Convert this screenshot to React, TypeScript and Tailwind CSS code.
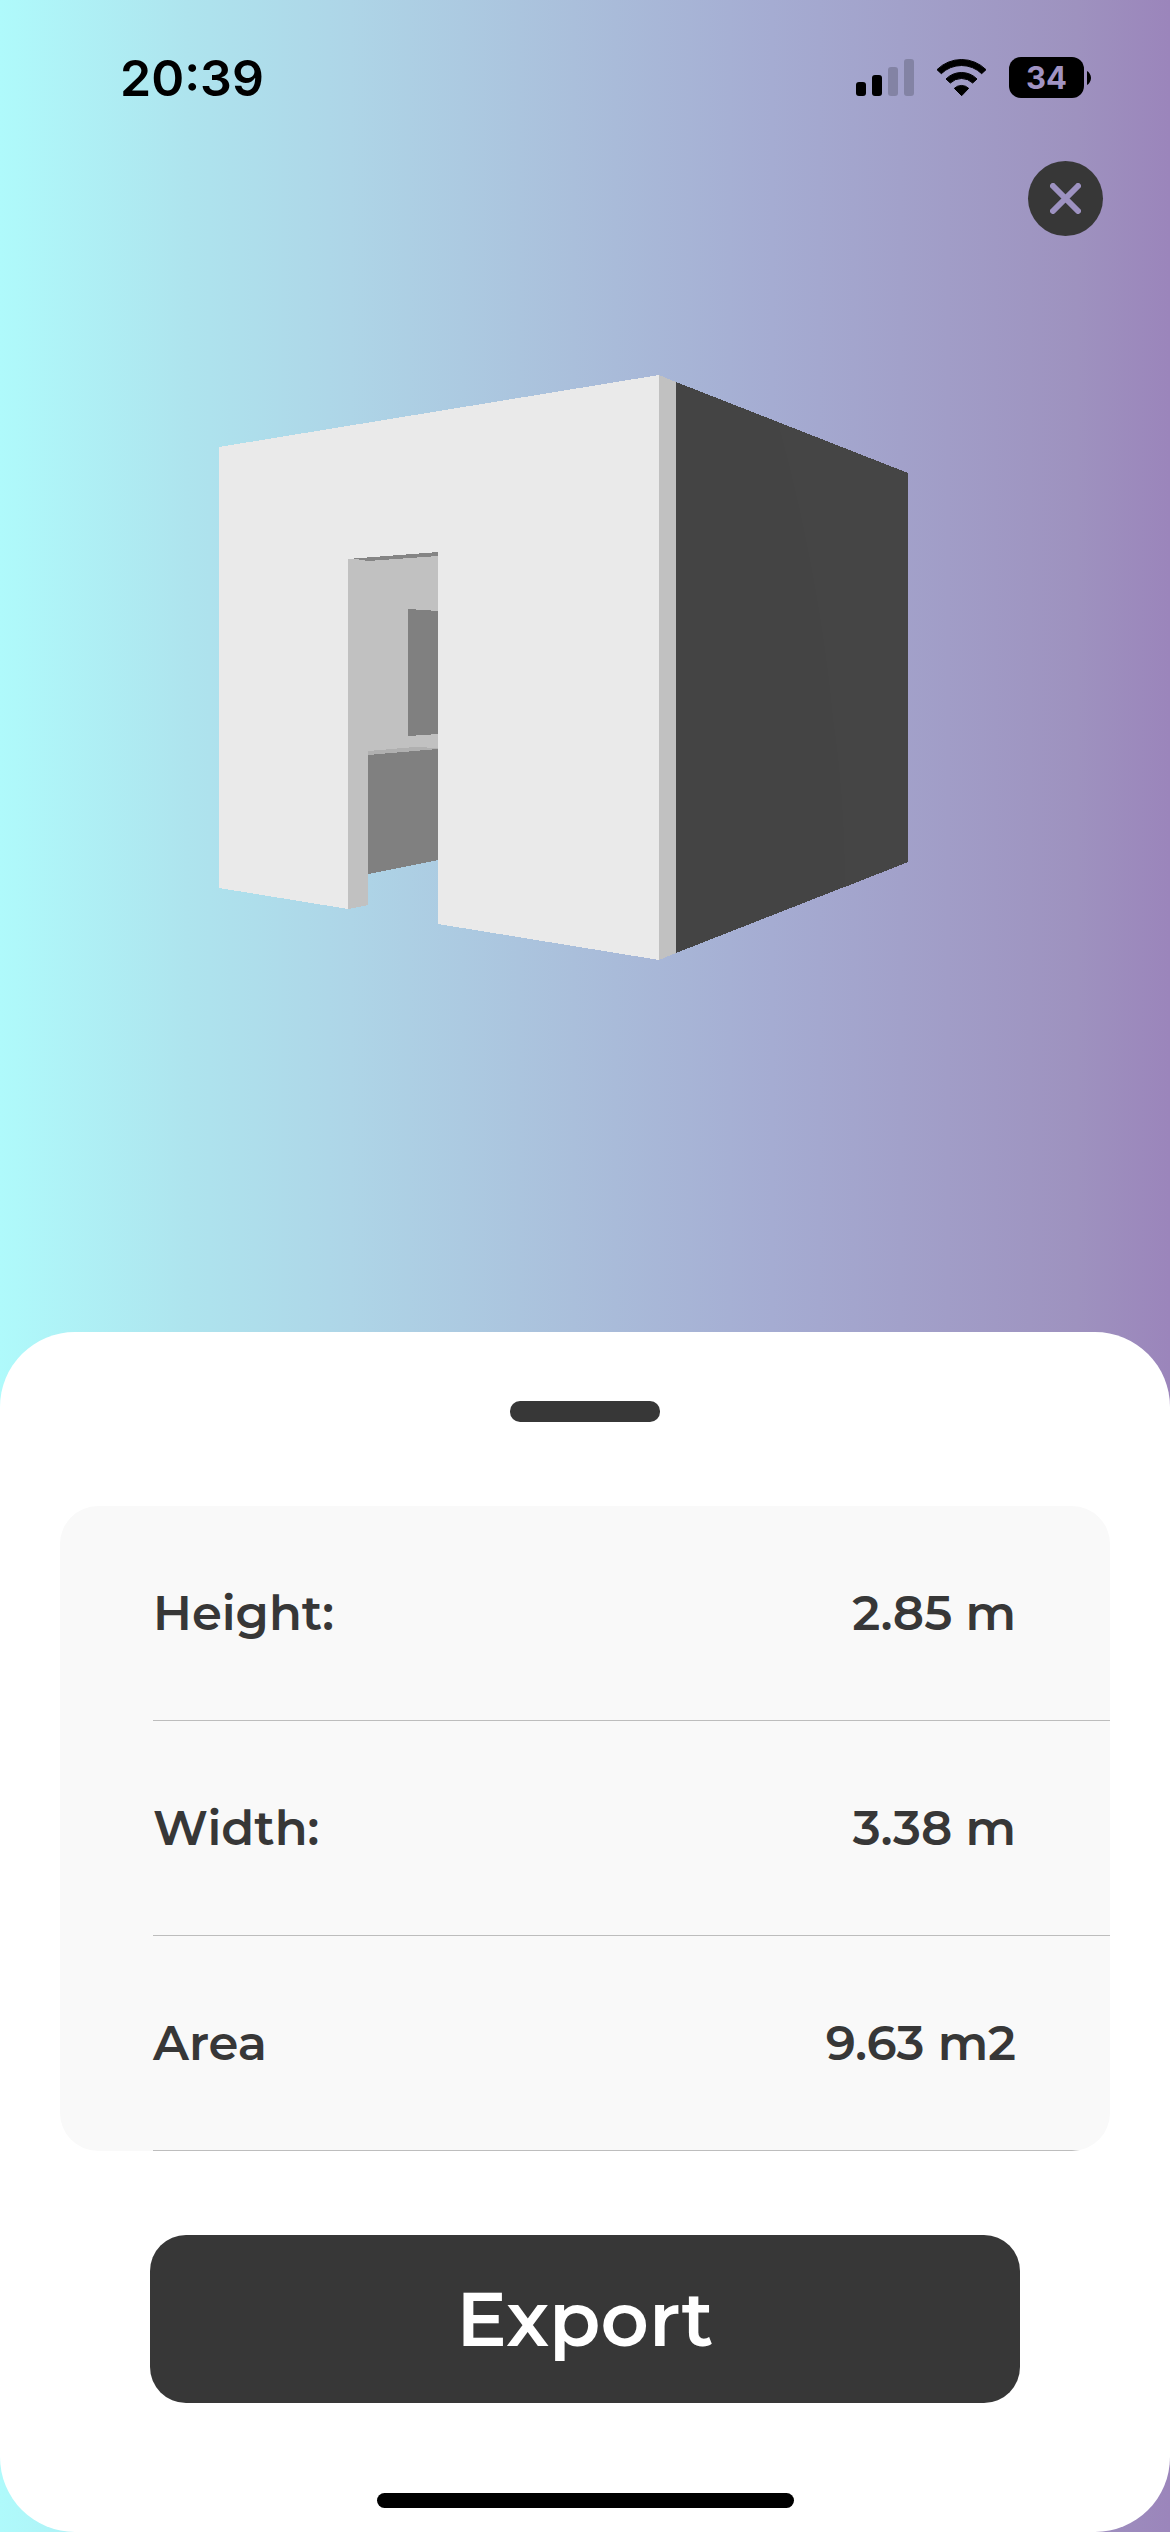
interface Measurement {
  id: number;
  label: string;
  value: string;
}

const measurements: Measurement[] = [
  { id: 1, label: "Height:", value: "2.85 m" },
  { id: 2, label: "Width:", value: "3.38 m" },
  { id: 3, label: "Area", value: "9.63 m2" },
];

function SignalIcon() {
  return (
    <svg viewBox="0 0 58 37" className="w-[58px] h-[37px]" aria-hidden="true">
      <rect x="0" y="23" width="10" height="14" rx="3" />
      <rect x="16" y="16" width="10" height="21" rx="3" />
      <rect x="32" y="8" width="10" height="29" rx="3" fill="#8383a4" />
      <rect x="48" y="0" width="10" height="37" rx="3" fill="#8383a4" />
    </svg>
  );
}

function WifiIcon() {
  return (
    <svg viewBox="0 0 153 111" className="w-[51px] h-[37px]" aria-hidden="true">
      <g stroke="#000000" strokeWidth="3" strokeLinejoin="round">
        <path d="M3 32 A104 104 0 0 1 150 32 L137 44 A87 87 0 0 0 16 44 Z" />
        <path d="M30 60 A65 65 0 0 1 123 60 L110 72 A48 48 0 0 0 43 72 Z" />
        <path d="M55 88 A31 31 0 0 1 98 88 L77 110 Z" />
      </g>
    </svg>
  );
}

function Battery({ level }: { level: number }) {
  return (
    <div className="flex items-center gap-[3px]">
      <div className="flex h-[41px] w-[75px] items-center justify-center rounded-xl bg-black text-[31px] leading-none font-bold text-[#a093c2]">
        {level}
      </div>
      <svg viewBox="0 0 4 14" className="w-1 h-[14px]" aria-hidden="true">
        <path d="M0 0 C2 1 4 4 4 7 C4 10 2 13 0 14 Z" />
      </svg>
    </div>
  );
}

function StatusBar() {
  return (
    <div className="flex h-[155px] items-center justify-between pl-[120px] pr-[79px]">
      <time className="text-[50px] leading-none font-semibold text-black">20:39</time>
      <div className="flex items-center gap-[22px]">
        <SignalIcon />
        <WifiIcon />
        <Battery level={34} />
      </div>
    </div>
  );
}

function RoomModel() {
  return (
    <svg
      viewBox="0 236 1170 1096"
      className="min-h-0 w-full flex-1"
      role="img"
      aria-label="3D model of the scanned room"
      shapeRendering="crispEdges"
    >
      {/* what shows through the doorway */}
      <path fill="#c1c1c1" d="M348 559 L438 552 L438 750 L368 756 L368 905 L348 909 Z" />
      <path fill="#858585" d="M350 558 L438 552 L438 556 L368 561 Z" />
      <path fill="#808080" d="M408 609 L438 611 L438 734 L408 736 Z" />
      <path fill="#b0b0b0" d="M368 751 L415 747 L438 748 L438 750 L368 756 Z" />
      <path fill="#808080" d="M368 755 L438 749 L438 860 L368 874 Z" />

      {/* front wall with the door cut out */}
      <path
        fill="#eaeaea"
        d="M219 447 L659 375 L659 960 L438 924 L438 552 L348 559 L348 909 L219 888 Z"
      />

      {/* wall edge and side wall */}
      <path fill="#c1c1c1" d="M659 375 L676 382 L676 953 L659 960 Z" />
      <path fill="#444444" d="M676 382 L908 473 L908 862 L676 953 Z" />
      <path
        fill="#454545"
        d="M778 422 L908 473 L908 862 L845 887 C845 830 841 770 833 718 C826 640 808 530 778 422 Z"
      />
    </svg>
  );
}

function MeasurementRow({ label, value }: { label: string; value: string }) {
  return (
    <div className="ml-[93px] flex h-[215px] items-center justify-between border-b border-[#bdbdbd] pr-[94px]">
      <dt>{label}</dt>
      <dd>{value}</dd>
    </div>
  );
}

export default function App() {
  return (
    <div className="flex min-h-screen flex-col bg-[linear-gradient(90deg,#affafb_0%,#aee4ee_16%,#aed5e7_30%,#aabfdb_49%,#a5acd2_66%,#9e92bf_92%,#9b85bb_100%)] font-['Inter','Liberation_Sans',sans-serif]">
      <StatusBar />

      <div className="flex justify-end pt-[6px] pr-[67px]">
        <button
          type="button"
          aria-label="Close"
          className="flex size-[75px] items-center justify-center rounded-full bg-[#373737]"
        >
          <svg viewBox="0 0 31 31" className="size-[31px]" aria-hidden="true">
            <path
              d="M3 3 L28 28 M28 3 L3 28"
              stroke="#9d92c1"
              strokeWidth="6"
              strokeLinecap="round"
            />
          </svg>
        </button>
      </div>

      <RoomModel />

      <section className="flex flex-col items-center rounded-[75px] bg-white px-[60px] pb-6 font-['Montserrat','Inter',sans-serif]">
        <div className="mt-[69px] h-[21px] w-[150px] rounded-[10px] bg-[#373737]" />

        <dl className="mt-21 w-full overflow-hidden rounded-[38px] bg-[#f9f9f9] text-[48px] leading-none font-semibold text-[#373737]">
          {measurements.map((item) => (
            <MeasurementRow key={item.id} label={item.label} value={item.value} />
          ))}
        </dl>

        <div className="mt-21 w-full px-[90px]">
          <button
            type="button"
            className="h-[168px] w-full rounded-[36px] bg-[#373737] text-[75px] leading-none font-semibold text-white"
          >
            Export
          </button>
        </div>

        <div className="mt-[90px] h-[15px] w-[417px] rounded-full bg-black" />
      </section>
    </div>
  );
}
